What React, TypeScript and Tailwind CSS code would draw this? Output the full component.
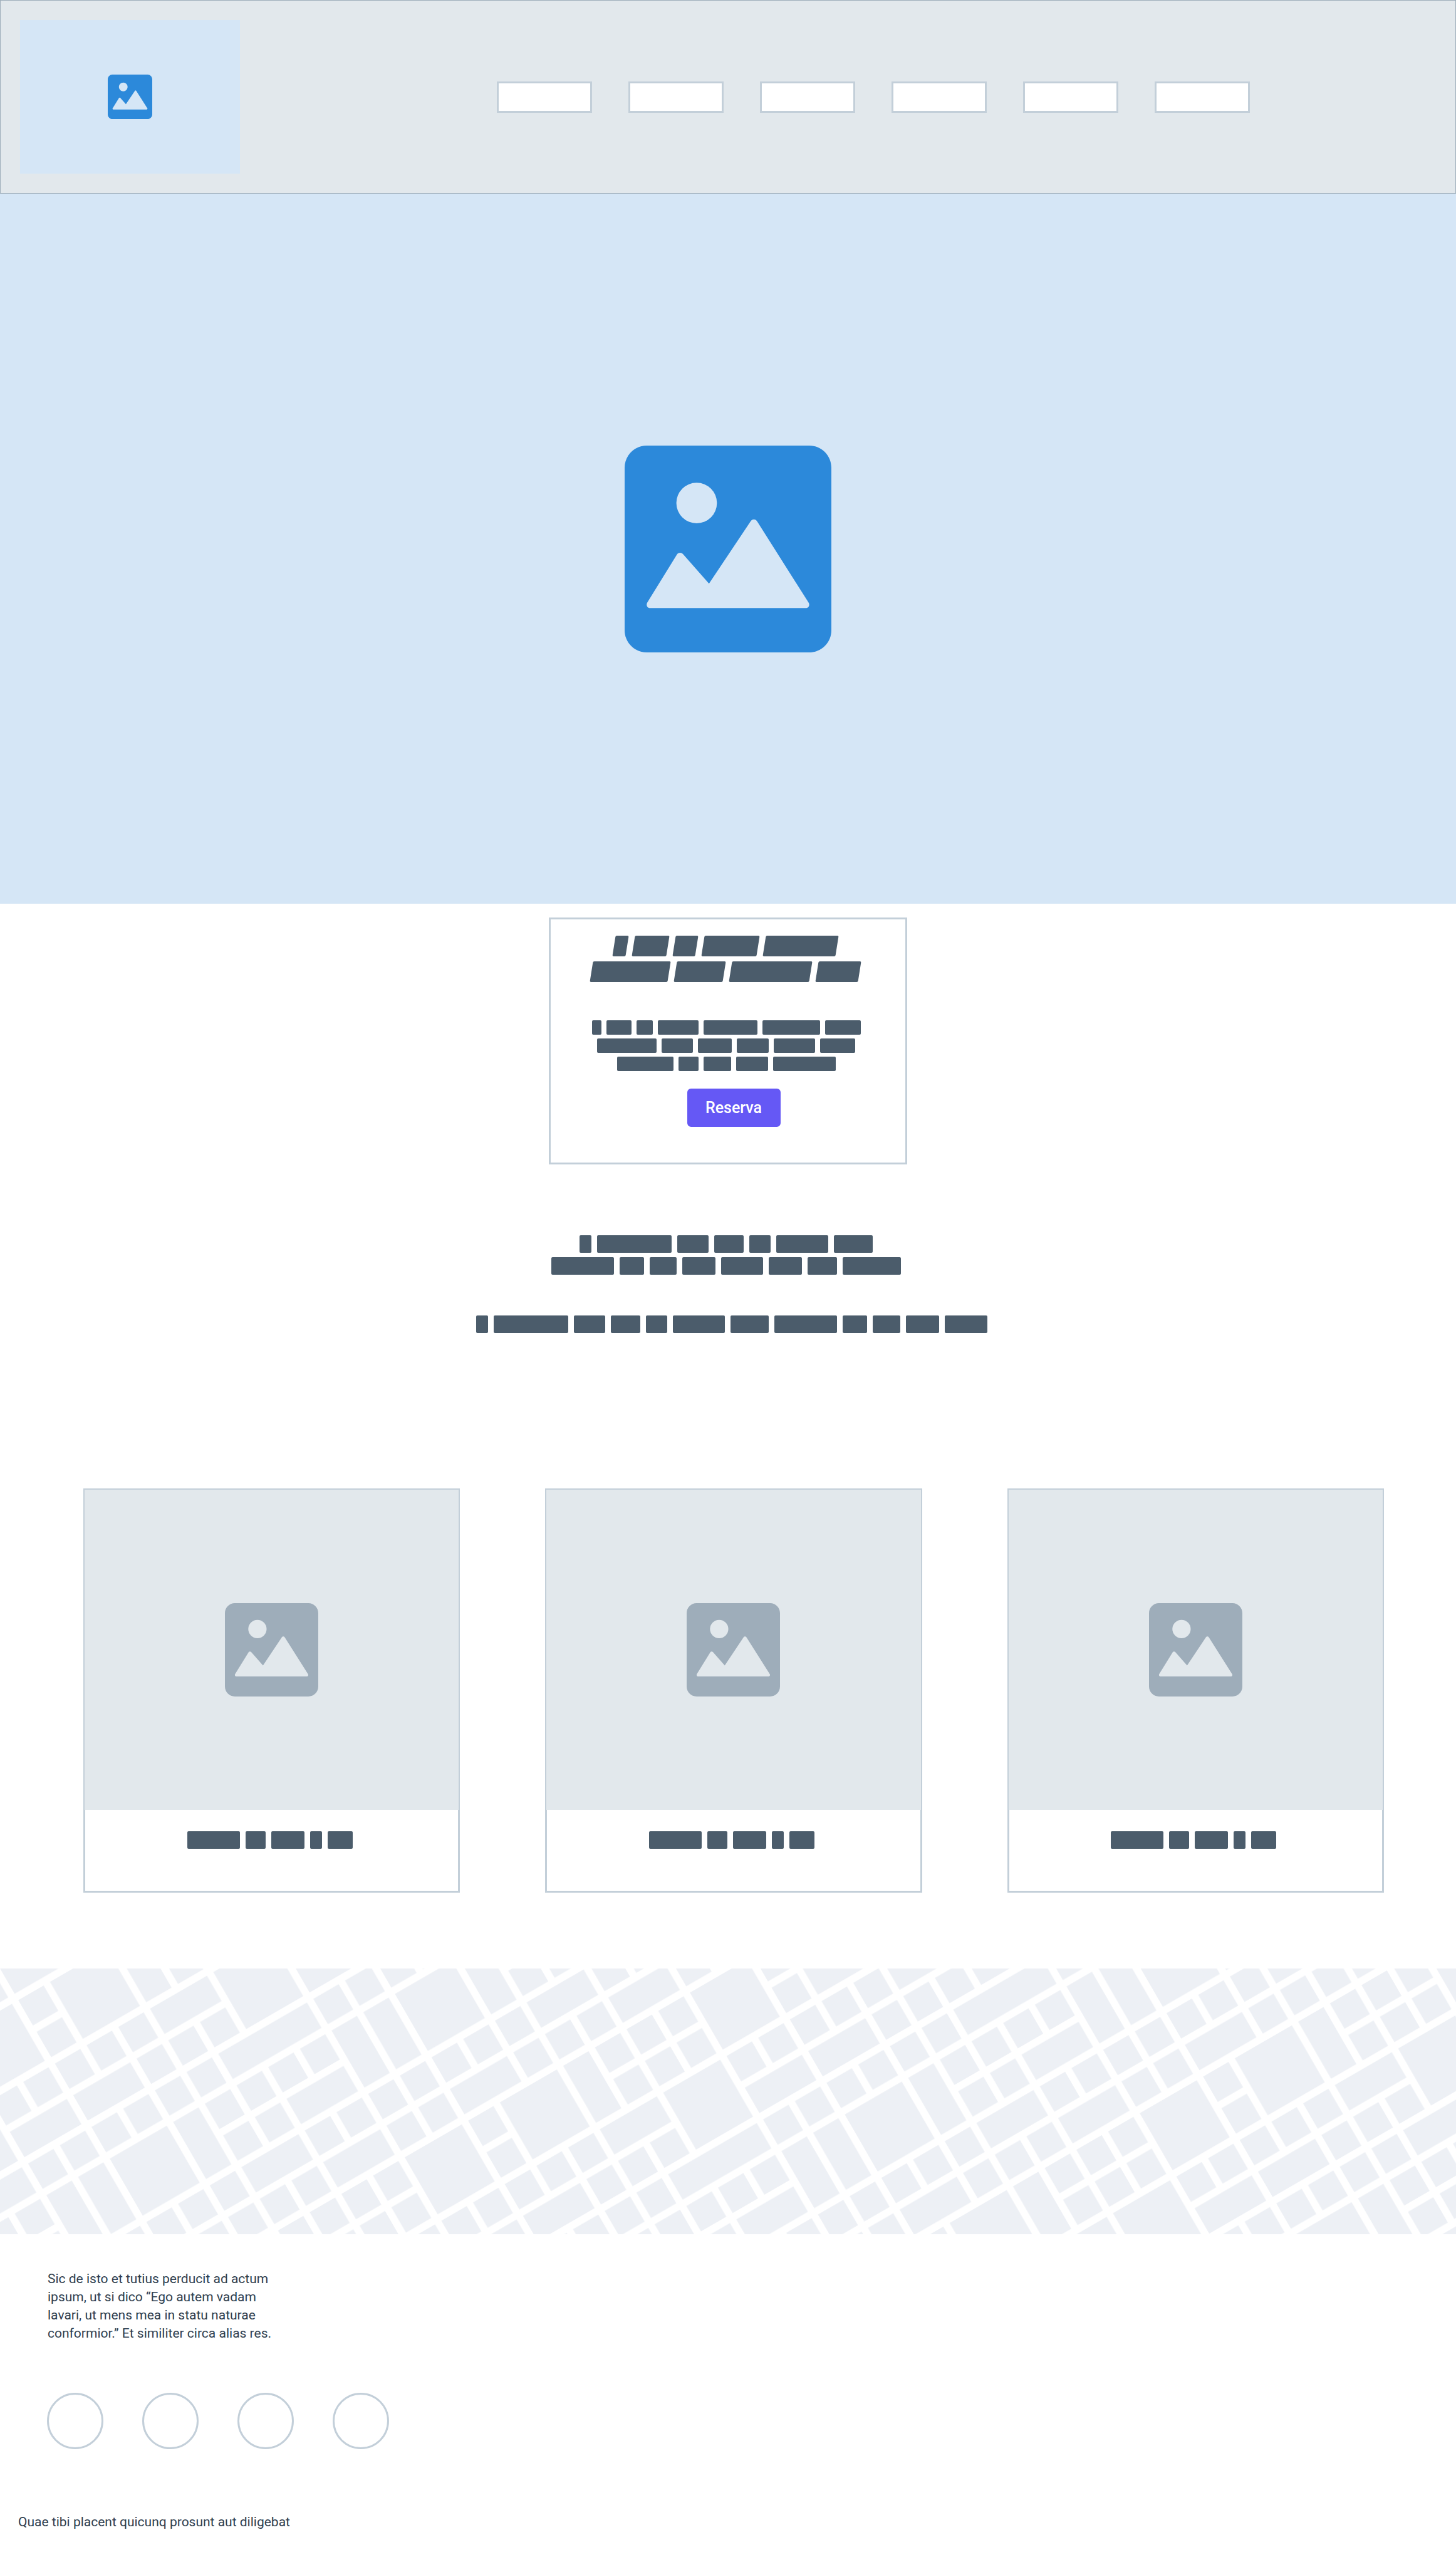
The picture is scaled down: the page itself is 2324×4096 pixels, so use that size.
import React from 'react';

const NAV_LINKS = ['Inicio', 'Nosotros', 'Servicios', 'Galería', 'Reservas', 'Contacto'];
const SOCIAL_LINKS = ['Facebook', 'Instagram', 'Twitter', 'YouTube'];

const TITLE_LINES = [
  [21, 55, 36, 88, 116],
  [124, 78, 128, 68],
];
const BODY_LINES = [
  [15, 40, 26, 65, 86, 92, 57],
  [95, 50, 54, 51, 66, 56],
  [90, 32, 44, 51, 100],
];
const INTRO_LINES = [
  [19, 119, 50, 47, 34, 83, 62],
  [100, 39, 43, 53, 67, 53, 47, 93],
];
const SUBTITLE_LINES = [[19, 119, 50, 47, 34, 83, 61, 100, 39, 44, 53, 68]];
const CARD_LINES = [[84, 32, 53, 19, 40]];

/* City blocks on a 9x9 street grid: column, row, columns spanned, rows spanned. */
const BLOCKS: [number, number, number, number][] = [
  [0, 0, 1, 1], [1, 0, 2, 2], [3, 0, 1, 2], [4, 0, 1, 1], [5, 0, 1, 1], [6, 0, 1, 1], [7, 0, 2, 2],
  [0, 1, 1, 1], [4, 1, 1, 1], [5, 1, 1, 1], [6, 1, 1, 1],
  [0, 2, 1, 1], [1, 2, 1, 1], [2, 2, 1, 1], [3, 2, 2, 1], [5, 2, 2, 2], [7, 2, 1, 1], [8, 2, 1, 1],
  [0, 3, 2, 1], [2, 3, 1, 1], [3, 3, 1, 1], [4, 3, 1, 1], [7, 3, 2, 1],
  [0, 4, 1, 1], [1, 4, 1, 1], [2, 4, 1, 1], [3, 4, 1, 1], [4, 4, 3, 1], [7, 4, 1, 1], [8, 4, 1, 1],
  [0, 5, 2, 2], [2, 5, 1, 2], [3, 5, 1, 1], [4, 5, 1, 1], [5, 5, 1, 1], [6, 5, 1, 1], [7, 5, 1, 2], [8, 5, 1, 2],
  [3, 6, 1, 1], [4, 6, 1, 1], [5, 6, 2, 1],
  [0, 7, 1, 1], [1, 7, 1, 1], [2, 7, 1, 1], [3, 7, 2, 1], [5, 7, 1, 1], [6, 7, 1, 1], [7, 7, 1, 1], [8, 7, 1, 1],
  [0, 8, 2, 1], [2, 8, 1, 1], [3, 8, 1, 1], [4, 8, 1, 1], [5, 8, 2, 1], [7, 8, 1, 1], [8, 8, 1, 1],
];

function PictureIcon({ className }: { className: string }) {
  return (
    <svg viewBox="79 102 1355 1355" className={className} aria-hidden="true">
      <path
        fill="currentColor"
        fillRule="evenodd"
        d="M224 102H1289C1369 102 1434 167 1434 247V1312C1434 1392 1369 1457 1289 1457H224C144 1457 79 1392 79 1312V247C79 167 144 102 224 102ZM551 345A133 133 0 1 0 551 611A133 133 0 1 0 551 345ZM247 1167C228 1167 217 1148 228 1130L422 815C431 801 450 800 462 813L632 1006L905 598C915 582 937 582 947 598L1284 1130C1296 1148 1284 1167 1266 1167Z"
      />
    </svg>
  );
}

function Bars({
  lines,
  rowClass,
  barClass,
  className = '',
}: {
  lines: number[][];
  rowClass: string;
  barClass: string;
  className?: string;
}) {
  return (
    <div className={`flex flex-col items-center ${className}`} aria-hidden="true">
      {lines.map((line, row) => (
        <div key={row} className={`flex ${rowClass}`}>
          {line.map((width, n) => (
            <span key={n} className={`block rounded-[2px] bg-[#4B5C6B] ${barClass}`} style={{ width }} />
          ))}
        </div>
      ))}
    </div>
  );
}

function StreetMap() {
  return (
    <svg className="mt-[121px] block h-[424px] w-full" role="img" aria-label="Mapa">
      <defs>
        <pattern
          id="streets"
          width="720"
          height="720"
          patternUnits="userSpaceOnUse"
          patternTransform="translate(29.2 50.5) rotate(-30) scale(0.73)"
        >
          {BLOCKS.map(([col, row, cols, rows]) => (
            <rect
              key={`${col}-${row}`}
              x={col * 80}
              y={row * 80}
              width={cols * 80 - 16}
              height={rows * 80 - 16}
              fill="#EDF0F5"
            />
          ))}
        </pattern>
      </defs>
      <rect width="100%" height="100%" fill="url(#streets)" />
    </svg>
  );
}

export default function App() {
  return (
    <div className="w-full bg-white font-['Roboto',sans-serif] text-[#2F3E4E]">
      <header className="flex h-[309px] items-center justify-between border border-[#9EADBA] bg-[#E2E8EC] pr-[328px] pl-[31px]">
        <a
          href="#inicio"
          aria-label="Logo"
          className="flex h-[245px] w-[351px] items-center justify-center bg-[#D5E6F6]"
        >
          <PictureIcon className="size-[71px] text-[#2C89DA]" />
        </a>
        <nav className="flex gap-[58px]">
          {NAV_LINKS.map((name) => (
            <a
              key={name}
              href="#contenido"
              aria-label={name}
              className="h-[50px] w-[152px] border-[3px] border-[#C3CFD9] bg-white"
            />
          ))}
        </nav>
      </header>

      <section className="flex h-[1133px] items-center justify-center bg-[#D5E6F6]">
        <PictureIcon className="size-[330px] text-[#2C89DA]" />
      </section>

      <main id="contenido">
        <section className="mx-auto mt-[22px] flex w-[572px] flex-col items-center border-[3px] border-[#C3CFD9] pt-[26px] pb-[57px]">
          <Bars lines={TITLE_LINES} rowClass="gap-[10px]" barClass="h-[33px] -skew-x-9" className="gap-2 pr-2" />
          <Bars lines={BODY_LINES} rowClass="gap-2" barClass="h-[23px]" className="mt-[61px] gap-1.5 pr-1.5" />
          <button
            type="button"
            className="mt-7 ml-[18px] h-[61px] w-[149px] rounded-md bg-[#6558F5] text-[25px] font-medium text-white"
          >
            Reserva
          </button>
        </section>

        <section className="mt-[113px]">
          <Bars lines={INTRO_LINES} rowClass="gap-[9px]" barClass="h-7" className="gap-[7px] pr-1.5" />
          <Bars lines={SUBTITLE_LINES} rowClass="gap-[9px]" barClass="h-7" className="mt-[65px] pl-3" />
        </section>

        <section className="mt-[248px] grid grid-cols-3 gap-[136px] pr-[115px] pl-[133px]">
          {[0, 1, 2].map((n) => (
            <article key={n} className="border-[3px] border-[#C3CFD9] pb-[67px]">
              <div className="-mx-px -mt-px flex h-[511px] items-center justify-center bg-[#E2E8EC]">
                <PictureIcon className="size-[149px] text-[#9EADBA]" />
              </div>
              <Bars lines={CARD_LINES} rowClass="gap-[9px]" barClass="h-7" className="mt-[34px] pr-1.5" />
            </article>
          ))}
        </section>

        <StreetMap />
      </main>

      <footer className="pt-[57px] pb-[57px] text-[21px] leading-[29px]">
        <p className="pl-[76px]">
          Sic de isto et tutius perducit ad actum
          <br />
          ipsum, ut si dico “Ego autem vadam
          <br />
          lavari, ut mens mea in statu naturae
          <br />
          conformior.” Et similiter circa alias res.
        </p>
        <div className="mt-20 flex gap-[62px] pl-[75px]">
          {SOCIAL_LINKS.map((name) => (
            <a
              key={name}
              href="#contenido"
              aria-label={name}
              className="size-[90px] rounded-full border-[3px] border-[#C3CFD9] bg-white"
            />
          ))}
        </div>
        <p className="mt-[102px] pl-[29px]">Quae tibi placent quicunq prosunt aut diligebat</p>
      </footer>
    </div>
  );
}
